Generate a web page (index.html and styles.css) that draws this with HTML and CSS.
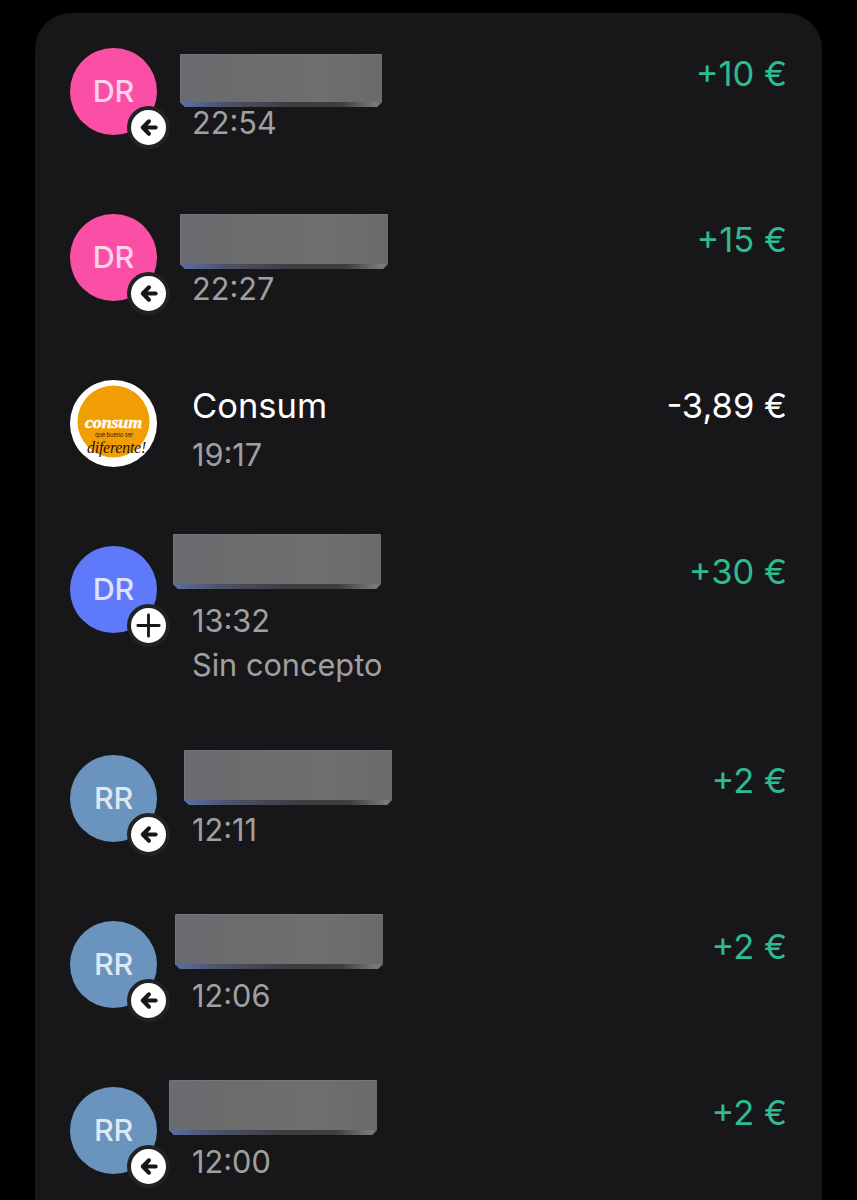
FILE: index.html
```html
<!DOCTYPE html>
<html lang="es">
<head>
<meta charset="utf-8">
<title>Movimientos</title>
<link rel="stylesheet" href="styles.css">
</head>
<body>
<svg class="defs" width="0" height="0" aria-hidden="true">
  <symbol id="arrow" viewBox="0 0 24 24"><path d="M19.5 12H6.5M12.5 5.5L6 12l6.5 6.5" fill="none" stroke="currentColor" stroke-width="4.2" stroke-linecap="round" stroke-linejoin="round"/></symbol>
  <symbol id="plus" viewBox="0 0 24 24"><path d="M12 2.5v19M2.5 12h19" fill="none" stroke="currentColor" stroke-width="2.5" stroke-linecap="round"/></symbol>
</svg>
<main class="card">
  <section class="row">
    <div class="avatar pink">DR<span class="badge"><svg class="ico"><use href="#arrow"/></svg></span></div>
    <div class="info"><div class="title"></div><div class="sub">22:54</div></div>
    <div class="amount in">+10 €</div>
    <div class="mask m1"></div>
  </section>
  <section class="row">
    <div class="avatar pink">DR<span class="badge"><svg class="ico"><use href="#arrow"/></svg></span></div>
    <div class="info"><div class="title"></div><div class="sub">22:27</div></div>
    <div class="amount in">+15 €</div>
    <div class="mask m2"></div>
  </section>
  <section class="row">
    <div class="avatar logo">
      <svg viewBox="0 0 87 87" width="87" height="87">
        <circle cx="43.5" cy="43.5" r="43.5" fill="#fff"/>
        <circle cx="43.5" cy="41.5" r="36" fill="#f19e04"/>
        <text x="15" y="48" textLength="57" lengthAdjust="spacingAndGlyphs" class="lg1">consum</text>
        <text x="25" y="57" textLength="38" lengthAdjust="spacingAndGlyphs" class="lg2">qué bueno ser</text>
        <text x="17" y="73" textLength="59" lengthAdjust="spacingAndGlyphs" class="lg3">diferente!</text>
      </svg>
    </div>
    <div class="info"><div class="title">Consum</div><div class="sub">19:17</div></div>
    <div class="amount">-3,89 €</div>
  </section>
  <section class="row tall">
    <div class="avatar blue">DR<span class="badge"><svg class="ico ico-plus"><use href="#plus"/></svg></span></div>
    <div class="info"><div class="title"></div><div class="sub">13:32</div><div class="sub concept">Sin concepto</div></div>
    <div class="amount in">+30 €</div>
    <div class="mask m4"></div>
  </section>
  <section class="row">
    <div class="avatar steel">RR<span class="badge"><svg class="ico"><use href="#arrow"/></svg></span></div>
    <div class="info"><div class="title"></div><div class="sub">12:11</div></div>
    <div class="amount in">+2 €</div>
    <div class="mask m5"></div>
  </section>
  <section class="row">
    <div class="avatar steel">RR<span class="badge"><svg class="ico"><use href="#arrow"/></svg></span></div>
    <div class="info"><div class="title"></div><div class="sub">12:06</div></div>
    <div class="amount in">+2 €</div>
    <div class="mask m6"></div>
  </section>
  <section class="row">
    <div class="avatar steel">RR<span class="badge"><svg class="ico"><use href="#arrow"/></svg></span></div>
    <div class="info"><div class="title"></div><div class="sub">12:00</div></div>
    <div class="amount in">+2 €</div>
    <div class="mask m7"></div>
  </section>
</main>
</body>
</html>
```
FILE: styles.css
```css
* { box-sizing: border-box; }
html, body { margin: 0; height: 100%; overflow: hidden; }
body {
  background: #000;
  font-family: Inter, "Liberation Sans", sans-serif;
  padding: 13px 35px 0;
}
.defs { position: absolute; }
.card {
  background: #17171a;
  border-radius: 36px 36px 0 0;
  padding: 35px 35px 0 35px;
  height: 1187px;
  overflow: hidden;
}
.row {
  position: relative;
  display: flex;
  align-items: flex-start;
  gap: 35px;
  height: 166px;
}
.row.tall { height: 209px; }
.avatar {
  position: relative;
  flex: none;
  width: 87px;
  height: 87px;
  border-radius: 50%;
  display: flex;
  align-items: center;
  justify-content: center;
  padding-bottom: 2px;
  font-size: 30.5px;
  font-weight: 500;
  letter-spacing: -0.2px;
}
.pink { background: #fb4fa6; color: #fdd3ea; }
.blue { background: #5f79fb; color: #dde3fe; }
.steel { background: #6a94bd; color: #dde8f3; }
.logo { padding-bottom: 0; }
.logo svg { display: block; }
.lg1 { font: italic 700 17px "Liberation Serif", serif; fill: #fff; stroke: #fff; stroke-width: 0.4px; }
.lg2 { font: 400 6.5px Inter, sans-serif; fill: #2a1a08; }
.lg3 { font: italic 400 16px "Liberation Serif", serif; fill: #1c120a; }
.badge {
  position: absolute;
  left: 57px;
  top: 58px;
  width: 43px;
  height: 43px;
  border-radius: 50%;
  background: #fff;
  border: 4px solid #222225;
  color: #17171a;
  display: flex;
  align-items: center;
  justify-content: center;
}
.ico { width: 23px; height: 23px; }
.ico-plus { width: 27px; height: 27px; }
.info { flex: 1; min-width: 0; }
.title {
  height: 52px;
  line-height: 52px;
  font-size: 34.5px;
  color: #fff;
}
.sub {
  line-height: 46px;
  font-size: 30.7px;
  color: #a0a0a3;
}
.concept { line-height: 42px; }
.amount {
  line-height: 52px;
  font-size: 34.5px;
  color: #fff;
  white-space: nowrap;
}
.amount.in { color: #2dbb8f; }
.mask {
  position: absolute;
  width: 208px;
  height: 55px;
  background: linear-gradient(90deg, #6a6b70, #6c6c6c 30%, #6f6f6f 70%, #6a6a6a);
  box-shadow: inset 1px 1px 0 #74767e;
  clip-path: polygon(1px 0, calc(100% - 1px) 0, 100% 1px, 100% calc(100% - 5px), calc(100% - 5px) 100%, 5px 100%, 0 calc(100% - 5px), 0 1px);
}
.mask::after {
  content: "";
  position: absolute;
  left: 0;
  right: 0;
  bottom: 0;
  height: 5px;
  background: linear-gradient(90deg, #5c6ea8, #4d5268 22%, #3c3c40 55%, #3f3f42 80%, #7a7a7a 97%, #6a6a6a);
}
.m1 { left: 110px; top: 6px; width: 202px; height: 53px; }
.m2 { left: 110px; top: 0; }
.m4 { left: 103px; top: -12px; }
.m5 { left: 114px; top: -5px; }
.m6 { left: 105px; top: -7px; }
.m7 { left: 99px; top: -7px; }
```
